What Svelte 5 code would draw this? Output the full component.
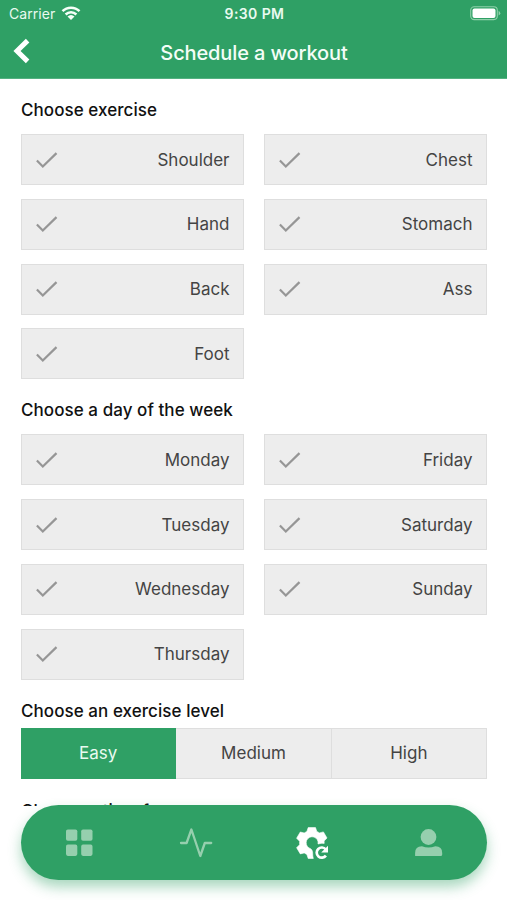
<script>
  const exercises = ['Shoulder', 'Chest', 'Hand', 'Stomach', 'Back', 'Ass', 'Foot'];
  const days = ['Monday', 'Friday', 'Tuesday', 'Saturday', 'Wednesday', 'Sunday', 'Thursday'];
  const levels = ['Easy', 'Medium', 'High'];
  let level = $state('Easy');
</script>

{#snippet options(items)}
  <div class="grid">
    {#each items as item}
      <button class="option">
        <svg width="22" height="18" viewBox="0 0 22 18"><path d="M.9 9.5 6.8 15.5 20.5 2.1" fill="none" stroke="#969696" stroke-width="2.2" /></svg>
        <span>{item}</span>
      </button>
    {/each}
  </div>
{/snippet}

<div class="phone">
  <header>
    <div class="status">
      <div class="carrier">
        <span>Carrier</span>
        <svg width="20" height="15" viewBox="0 0 20 15">
          <g fill="none" stroke="#f5fff8" stroke-width="2.5">
            <path d="M1.5 5.2C6.2.5 13.8.5 18.5 5.2" />
            <path d="M4.6 8.5C7.7 5.5 12.3 5.5 15.4 8.5" />
          </g>
          <path d="M6.5 10.5Q10 7.5 13.5 10.5L10 14Z" fill="#f5fff8" />
        </svg>
      </div>
      <span class="time">9:30 PM</span>
      <svg class="battery" width="31" height="15" viewBox="0 0 31 15">
        <rect x=".7" y=".8" width="26.6" height="12.8" rx="3.5" fill="none" stroke="#8fd0aa" stroke-width="1.1" />
        <rect x="2.5" y="2.5" width="23" height="9.4" rx="2" fill="#fff" />
        <path d="M28.6 4.8q3.4 2.4 0 4.8z" fill="#8fd0aa" />
      </svg>
    </div>
    <div class="bar">
      <svg width="18" height="26" viewBox="0 0 18 26"><path d="M14.6 2.6 4 13 14.6 23.4" fill="none" stroke="#fff" stroke-width="5" /></svg>
      <h1>Schedule a workout</h1>
    </div>
  </header>

  <main>
    <h2>Choose exercise</h2>
    {@render options(exercises)}
    <h2 class="days">Choose a day of the week</h2>
    {@render options(days)}
    <h2 class="level">Choose an exercise level</h2>
    <div class="segments">
      {#each levels as name}
        <button class:active={level === name} onclick={() => (level = name)}>{name}</button>
      {/each}
    </div>
    <h2 class="period">Choose a time for</h2>
  </main>

  <nav>
    <div>
      <svg width="36" height="36" viewBox="0 0 36 36" fill="#96cfae">
        <rect x="5" y="4.5" width="11.3" height="11.3" rx="1.8" /><rect x="20.2" y="4.5" width="11.3" height="11.3" rx="1.8" />
        <rect x="5" y="19.6" width="11.3" height="11.3" rx="1.8" /><rect x="20.2" y="19.6" width="11.3" height="11.3" rx="1.8" />
      </svg>
    </div>
    <div>
      <svg width="36" height="36" viewBox="0 0 36 36"><path d="M3 18H8.6L13.4 4.5 22.3 31 26.8 18H33.2" fill="none" stroke="#96cfae" stroke-width="2.3" stroke-linecap="round" stroke-linejoin="round" /></svg>
    </div>
    <div>
      <svg width="36" height="36" viewBox="0 0 36 36">
        <path fill="#fff" stroke="#fff" stroke-width=".6" stroke-linejoin="round" d="M14.2 2.6H21.5L22.8 6.4 25.5 7.9 29.4 6.9 33 13 30.1 16 30.2 18.4 Q27.2 17.9 24 19 A6 6 0 1 0 15 22.9 Q18.9 24.2 18.7 28.5 Q18.6 31 19.3 33.5H14.2L12.9 29.5 10.2 27.9 6.3 28.9 2.6 22.7 5.6 19.7V16.3L2.6 13.2 6.3 7 10.2 8 12.9 6.4Z" />
        <path d="M31.7 24.3A5.1 5.1 0 1 0 31.9 30.6" fill="none" stroke="#fff" stroke-width="2.7" />
        <path d="M34 20.8V27.6H27.2Z" fill="#fff" />
      </svg>
    </div>
    <div>
      <svg width="36" height="36" viewBox="0 0 36 36" fill="#96cfae">
        <circle cx="17.5" cy="12" r="7.9" />
        <path d="M4.1 31V28Q4.1 21.3 10.9 21.3Q14.2 22.5 17.5 22.5Q20.8 22.5 24.4 21.3Q31.2 21.3 31.2 28V29.4Q31.2 31 29.6 31Z" />
      </svg>
    </div>
  </nav>
</div>

<style>
  :global(body) { margin: 0; background: #fff; }
  * { box-sizing: border-box; }
  svg { display: block; flex: none; }
  .phone {
    position: relative;
    width: 507px;
    height: 900px;
    overflow: hidden;
    background: #fff;
    font-family: Inter, 'Liberation Sans', sans-serif;
    color: #111;
  }
  header { height: 79px; background: #2fa065; color: #fff; border-bottom: 1px solid #54b181; }
  .status {
    display: grid;
    grid-template-columns: 1fr auto 1fr;
    align-items: center;
    height: 27px;
    padding: 0 6px 0 9px;
    font-size: 14px;
    color: #e9faf0;
  }
  .carrier { display: flex; align-items: center; gap: 6px; letter-spacing: .05px; }
  .time { font-weight: 600; font-size: 14px; letter-spacing: .4px; margin-right: 1px; }
  .battery { justify-self: end; }
  .bar { display: grid; grid-template-columns: 40px 1fr 40px; align-items: center; height: 48px; padding: 0 0 0 13px; }
  h1 { margin: 3px 12px 0 0; text-align: center; font-size: 20px; font-weight: 500; letter-spacing: -.12px; line-height: 24px; color: #f3fdf7; }
  /* the scrolling area ends where the floating nav begins */
  main { height: 727px; overflow: hidden; padding: 21px 20px 0 21px; }
  h2 { margin: 0 0 13px; font-size: 17px; line-height: 21px; font-weight: 500; letter-spacing: .06px; white-space: nowrap; }
  h2.days { margin: 21px 0 13px; }
  h2.level { margin: 21px 0 6.2px; }
  h2.period { margin: 21.6px 0 0; }
  .grid { display: grid; grid-template-columns: 1fr 1fr; gap: 13.8px 20px; }
  button { font: inherit; cursor: pointer; }
  .option {
    display: flex;
    align-items: center;
    justify-content: space-between;
    height: 51px;
    padding: 0 13.5px 0 14px;
    border: 1px solid #dedede;
    background: #ededed;
    color: #444;
    font-size: 17px;
  }
  .segments { display: grid; grid-template-columns: repeat(3, 1fr); height: 51px; }
  .segments button { padding: 0; border: 1px solid #dedede; border-left-width: 0; background: #ededed; color: #444; font-size: 17px; }
  .segments .active { border-color: #2fa065; background: #2fa065; color: #e9faf0; }
  nav {
    position: absolute;
    left: 21px;
    top: 805px;
    display: grid;
    grid-template-columns: repeat(4, 1fr);
    align-items: center;
    width: 466px;
    height: 75px;
    border-radius: 37.5px;
    background: #2fa065;
    box-shadow: 0 7px 13px rgba(47, 160, 101, .42);
  }
  nav div { display: flex; justify-content: center; }
</style>
